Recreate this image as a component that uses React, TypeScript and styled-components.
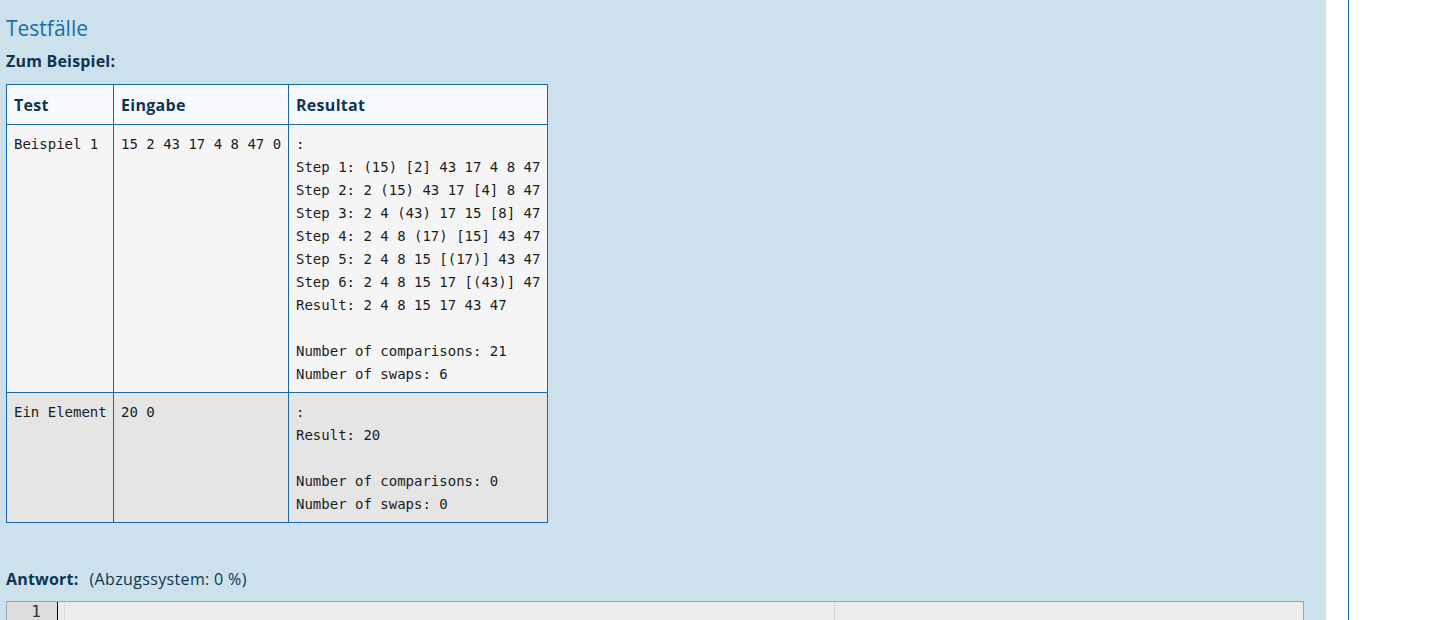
import React from "react";
import styled, { createGlobalStyle } from "styled-components";

const Global = createGlobalStyle`
  html, body { margin: 0; padding: 0; background: #ffffff; }
  body { font-family: "Open Sans", "Noto Sans", sans-serif; overflow: hidden; }
`;

const Page = styled.div`
  display: flex;
  width: 1443px;
  height: 620px;
  overflow: hidden;
`;

const Main = styled.div`
  width: 1320px;
  flex: none;
  background: #cde1ec;
  padding: 13px 0 0 6px;
  color: #0e3550;
`;

const Gap = styled.div`
  width: 22px;
  flex: none;
  background: #ffffff;
`;

const Side = styled.div`
  flex: 1;
  border-left: 1px solid #1769aa;
  background: #ffffff;
`;

const Title = styled.h3`
  margin: 0;
  font-size: 21px;
  font-weight: 400;
  line-height: 30px;
  color: #1a6ea6;
`;

const Label = styled.div`
  margin-top: 6px;
  font-size: 16px;
  font-weight: 700;
  line-height: 24px;
  letter-spacing: 0.2px;
`;

const Table = styled.table`
  margin-top: 11px;
  border-collapse: collapse;
  table-layout: fixed;
  width: 542px;
`;

const HeadCell = styled.th`
  border: 1px solid #1769aa;
  background: #f8f9fe;
  text-align: left;
  font-size: 16px;
  font-weight: 700;
  height: 23px;
  padding: 8px 7px;
  color: #0e3550;
  letter-spacing: 0.3px;
`;

const Row = styled.tr<{ $shade: string }>`
  background: ${(p) => p.$shade};
`;

const Cell = styled.td`
  border: 1px solid #1769aa;
  vertical-align: top;
  padding: 8px 7px 6px;
`;

const Mono = styled.pre`
  margin: 0;
  font-family: "DejaVu Sans Mono", "Liberation Mono", monospace;
  font-size: 14px;
  line-height: 23px;
  color: #1c1c1c;
  white-space: pre;
`;

const Answer = styled.div`
  margin-top: 44px;
  font-size: 16px;
  line-height: 24px;
  display: flex;
  gap: 11px;
  letter-spacing: 0.35px;
`;

const Bold = styled.span`
  font-weight: 700;
  letter-spacing: 0.2px;
`;

const Editor = styled.div`
  margin-top: 10px;
  width: 1296px;
  height: 40px;
  border: 1px solid #a2a6aa;
  background: #ececec;
  display: flex;
`;

const Gutter = styled.div`
  width: 50px;
  flex: none;
  background: #dcdcdc;
  font-family: "DejaVu Sans Mono", monospace;
  font-size: 16px;
  line-height: 20px;
  color: #333333;
  text-align: right;
  padding-right: 16px;
  box-sizing: border-box;
`;

const Content = styled.div`
  flex: 1;
  position: relative;
  border-left: 1px solid #000000;
`;

const Margin = styled.div`
  position: absolute;
  top: 0;
  bottom: 0;
  left: 6px;
  width: 1px;
  background: #dadada;
`;

const PrintMargin = styled.div`
  position: absolute;
  top: 0;
  bottom: 0;
  left: 776px;
  width: 1px;
  background: #d4d4d4;
`;

const rows = [
  {
    test: "Beispiel 1",
    input: "15 2 43 17 4 8 47 0",
    result: `:
Step 1: (15) [2] 43 17 4 8 47
Step 2: 2 (15) 43 17 [4] 8 47
Step 3: 2 4 (43) 17 15 [8] 47
Step 4: 2 4 8 (17) [15] 43 47
Step 5: 2 4 8 15 [(17)] 43 47
Step 6: 2 4 8 15 17 [(43)] 47
Result: 2 4 8 15 17 43 47

Number of comparisons: 21
Number of swaps: 6`,
    shade: "#f5f5f5",
  },
  {
    test: "Ein Element",
    input: "20 0",
    result: `:
Result: 20

Number of comparisons: 0
Number of swaps: 0`,
    shade: "#e5e5e5",
  },
];

export default function App() {
  return (
    <Page>
      <Global />
      <Main>
        <Title>Testfälle</Title>
        <Label>Zum Beispiel:</Label>
        <Table>
          <colgroup>
            <col style={{ width: 107 }} />
            <col style={{ width: 175 }} />
            <col style={{ width: 259 }} />
          </colgroup>
          <thead>
            <tr>
              <HeadCell>Test</HeadCell>
              <HeadCell>Eingabe</HeadCell>
              <HeadCell>Resultat</HeadCell>
            </tr>
          </thead>
          <tbody>
            {rows.map((r) => (
              <Row key={r.test} $shade={r.shade}>
                <Cell>
                  <Mono>{r.test}</Mono>
                </Cell>
                <Cell>
                  <Mono>{r.input}</Mono>
                </Cell>
                <Cell>
                  <Mono>{r.result}</Mono>
                </Cell>
              </Row>
            ))}
          </tbody>
        </Table>
        <Answer>
          <Bold>Antwort:</Bold>
          <span>(Abzugssystem: 0 %)</span>
        </Answer>
        <Editor>
          <Gutter>1</Gutter>
          <Content>
            <Margin />
            <PrintMargin />
          </Content>
        </Editor>
      </Main>
      <Gap />
      <Side />
    </Page>
  );
}
